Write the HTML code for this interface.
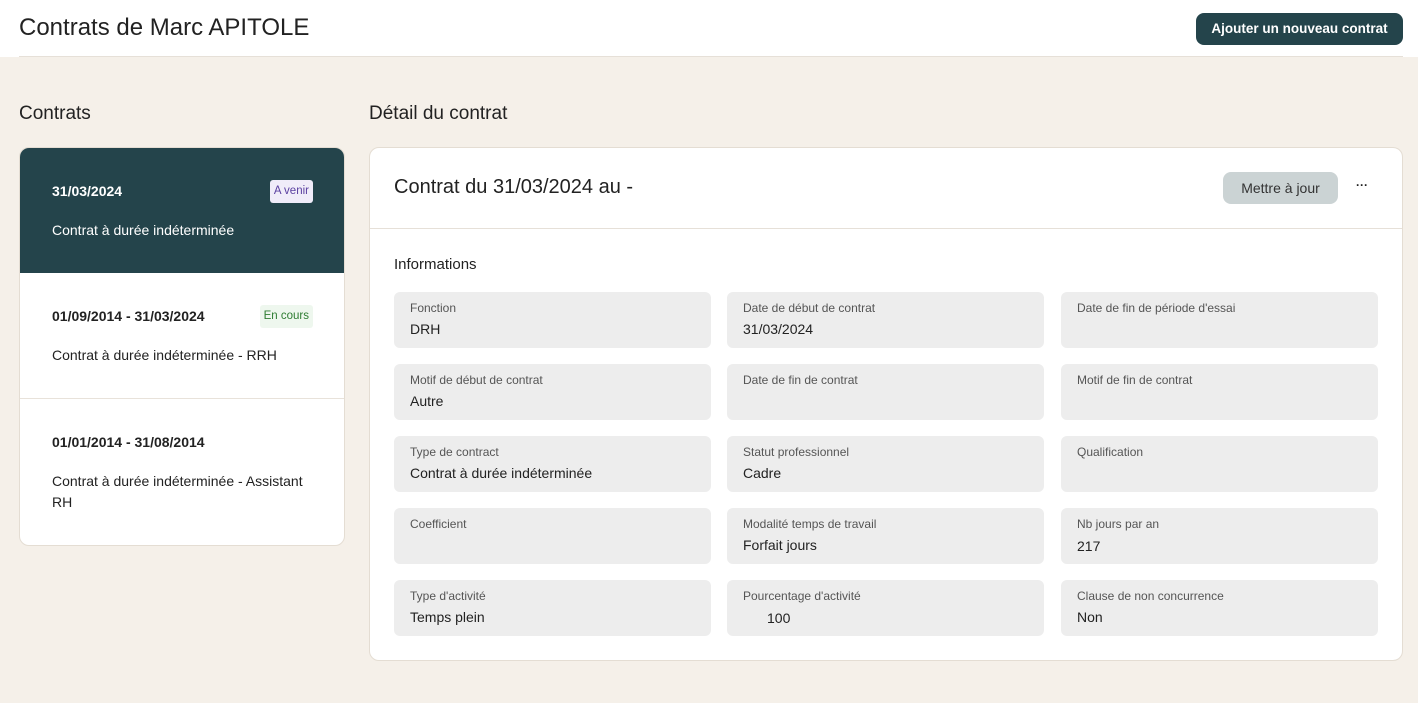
<!DOCTYPE html>
<html><head><meta charset="utf-8"><style>
*{box-sizing:border-box;margin:0;padding:0}
body{width:1418px;height:703px;background:#f5f0e9;font-family:"Liberation Sans",sans-serif;color:#222;position:relative;overflow:hidden}
.hdr{position:absolute;left:0;top:0;width:1418px;height:57px;background:#fff}
.hdr .line{position:absolute;left:19px;right:15px;bottom:0;height:1px;background:#e6e0d8}
.abs{position:absolute}
h1{position:absolute;left:19px;top:14px;font-size:24px;font-weight:normal;color:#222}
.btn{position:absolute;left:1196px;top:13px;width:207px;height:32px;background:#24444b;color:#fff;border-radius:8px;font-size:13.5px;font-weight:bold;text-align:center;line-height:32px}
h2{position:absolute;font-size:19px;font-weight:normal;top:103px;color:#222}
.lc{position:absolute;left:19px;top:147px;width:326px;height:399px;background:#fff;border:1px solid #e4ddd3;border-radius:10px;overflow:hidden}
.it{position:absolute;left:0;width:326px;border-bottom:1px solid #e8e2da}
.it .d{position:absolute;left:32px;font-size:14px;font-weight:bold}
.it .t{position:absolute;left:32px;font-size:14px;line-height:21px;width:270px}
.badge{position:absolute;right:33px;font-size:11.5px;padding:0 4px;height:23px;line-height:23px;border-radius:3px}
.rc{position:absolute;left:369px;top:147px;width:1034px;height:514px;background:#fff;border:1px solid #e4ddd3;border-radius:10px}
.f{position:absolute;width:317px;height:56px;background:#ededed;border-radius:6px}
.f .l{position:absolute;left:16px;top:9px;font-size:12px;color:#555}
.f .v{position:absolute;left:16px;top:29px;font-size:14px;color:#222}
</style></head><body>
<div class="hdr"><div class="line"></div></div>
<h1>Contrats de Marc APITOLE</h1>
<div class="btn">Ajouter un nouveau contrat</div>
<h2 style="left:19px">Contrats</h2>
<h2 style="left:369px">Détail du contrat</h2>
<div class="lc">
 <div class="it" style="top:0;height:125px;background:#24444b;color:#fff;border:none">
  <div class="d" style="top:35px">31/03/2024</div>
  <div class="badge" style="top:32px;background:#f0ecf9;color:#5a3fa0">A venir</div>
  <div class="t" style="top:72px">Contrat à durée indéterminée</div>
 </div>
 <div class="it" style="top:125px;height:126px">
  <div class="d" style="top:35px;font-weight:bold">01/09/2014 - 31/03/2024</div>
  <div class="badge" style="top:32px;background:#eef7ee;color:#2e7d32">En cours</div>
  <div class="t" style="top:72px">Contrat à durée indéterminée - RRH</div>
 </div>
 <div class="it" style="top:251px;height:148px;border:none">
  <div class="d" style="top:35px">01/01/2014 - 31/08/2014</div>
  <div class="t" style="top:72px">Contrat à durée indéterminée - Assistant RH</div>
 </div>
</div>
<div class="rc">
 <div class="abs" style="left:24px;top:28px;font-size:20px">Contrat du 31/03/2024 au -</div>
 <div class="abs" style="left:853px;top:24px;width:115px;height:32px;background:#cbd3d4;border-radius:8px;font-size:14px;text-align:center;line-height:32px;color:#333">Mettre à jour</div>
 <div class="abs" style="left:986px;top:30px;font-size:12px;font-weight:bold">···</div>
 <div class="abs" style="left:0;top:80px;width:1032px;height:1px;background:#e6e0d8"></div>
 <div class="abs" style="left:24px;top:108px;font-size:15px">Informations</div>
</div>
<div class="f" style="left:394px;top:292px"><div class="l">Fonction</div><div class="v">DRH</div></div>
<div class="f" style="left:727px;top:292px"><div class="l">Date de début de contrat</div><div class="v">31/03/2024</div></div>
<div class="f" style="left:1061px;top:292px"><div class="l">Date de fin de période d'essai</div></div>
<div class="f" style="left:394px;top:364px"><div class="l">Motif de début de contrat</div><div class="v">Autre</div></div>
<div class="f" style="left:727px;top:364px"><div class="l">Date de fin de contrat</div></div>
<div class="f" style="left:1061px;top:364px"><div class="l">Motif de fin de contrat</div></div>
<div class="f" style="left:394px;top:436px"><div class="l">Type de contract</div><div class="v">Contrat à durée indéterminée</div></div>
<div class="f" style="left:727px;top:436px"><div class="l">Statut professionnel</div><div class="v">Cadre</div></div>
<div class="f" style="left:1061px;top:436px"><div class="l">Qualification</div></div>
<div class="f" style="left:394px;top:508px"><div class="l">Coefficient</div></div>
<div class="f" style="left:727px;top:508px"><div class="l">Modalité temps de travail</div><div class="v">Forfait jours</div></div>
<div class="f" style="left:1061px;top:508px"><div class="l">Nb jours par an</div><div class="v" style="top:30px">217</div></div>
<div class="f" style="left:394px;top:580px"><div class="l">Type d'activité</div><div class="v">Temps plein</div></div>
<div class="f" style="left:727px;top:580px"><div class="l">Pourcentage d'activité</div><div class="v" style="left:40px;top:30px">100</div></div>
<div class="f" style="left:1061px;top:580px"><div class="l">Clause de non concurrence</div><div class="v">Non</div></div>
</body></html>
